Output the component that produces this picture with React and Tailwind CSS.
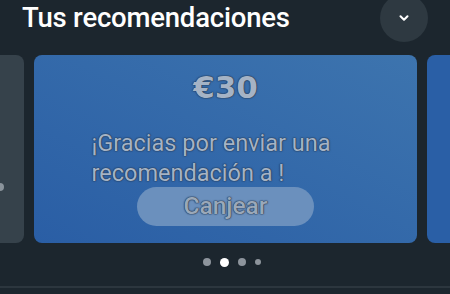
import React from 'react';

// Chevron for the collapse button
const ChevronDown = () => (
  <svg width="14" height="14" viewBox="0 0 24 24" fill="none" stroke="white" strokeWidth="3.5" strokeLinecap="round" strokeLinejoin="round">
    <path d="M6 9l6 6 6-6" />
  </svg>
);

const outline = '[text-shadow:0_0_1px_#23364f,0_0_1px_#23364f,0_0_2px_#2a4060]';

const App = () => {
  const dots = ['w-2 h-2 bg-[#8d949c]', 'w-[9px] h-[9px] bg-white', 'w-2 h-2 bg-[#8d949c]', 'w-[6px] h-[6px] bg-[#8d949c]'];

  return (
    <div className="w-[450px] h-[294px] overflow-hidden bg-[#1c262e] font-['Roboto',sans-serif] flex flex-col">
      {/* Header */}
      <div className="h-[55px] flex items-start justify-between pl-[22px] pr-[22px]">
        <h2 className="text-[27.5px] leading-[36px] font-medium text-white tracking-[-0.2px]">Tus recomendaciones</h2>
        <button className="w-[48px] h-[48px] -mt-[6px] rounded-full bg-[#2e3941] flex items-center justify-center">
          <ChevronDown />
        </button>
      </div>

      {/* Cards carousel */}
      <div className="flex gap-[10px] h-[188px] -ml-[8px]">
        <div className="w-[32px] shrink-0 rounded-lg bg-[#36424b] flex items-center pl-[4px] pt-[76px]">
          <div className="w-[8px] h-[8px] rounded-full bg-[#8a939b]" />
        </div>
        <div className="w-[383px] shrink-0 rounded-lg bg-gradient-to-tr from-[#2a5ea5] to-[#3d74ae] flex flex-col items-center pt-[12px]">
          <div className={`font-['DejaVu_Sans',sans-serif] text-[31px] leading-[40px] font-bold text-[#a5b3c5] ${outline}`}>€30</div>
          <p className={`mt-[21px] w-[268px] text-left text-[23.5px] leading-[30px] text-[#a5b3c5] ${outline}`}>
            ¡Gracias por enviar una recomendación a !
          </p>
          <button className="-mt-[1px] w-[177px] h-[39px] rounded-full bg-[#6b90bd] flex items-center justify-center">
            <span className={`text-[24.5px] font-medium text-[#9aa8b9] ${outline}`}>Canjear</span>
          </button>
        </div>
        <div className="w-[40px] shrink-0 rounded-lg bg-[#2a5fa6]" />
      </div>

      {/* Page dots */}
      <div className="flex items-center justify-center gap-[9px] mt-[14px] h-[10px] pl-[14px]">
        {dots.map((c, i) => (
          <div key={i} className={`rounded-full ${c}`} />
        ))}
      </div>

      <div className="mt-[19px] h-[2px] bg-[#2c363e]" />
      <div className="flex-1 bg-[#1c262e]" />
    </div>
  );
};

export default App;
